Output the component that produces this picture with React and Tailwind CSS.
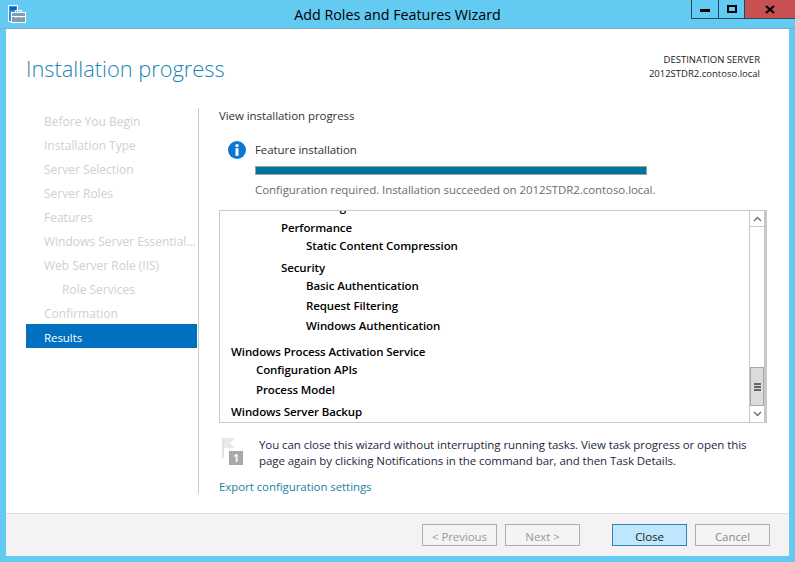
const font = { fontFamily: '"Open Sans", "Noto Sans", sans-serif' };

const steps = [
  { label: 'Before You Begin' },
  { label: 'Installation Type' },
  { label: 'Server Selection' },
  { label: 'Server Roles' },
  { label: 'Features' },
  { label: 'Windows Server Essentials Experience' },
  { label: 'Web Server Role (IIS)' },
  { label: 'Role Services', sub: true },
  { label: 'Confirmation' },
];

const logRows = [
  { text: 'Performance', indent: 'pl-[61px]', gap: 'mt-0' },
  { text: 'Static Content Compression', indent: 'pl-[86px]', gap: 'mt-0' },
  { text: 'Security', indent: 'pl-[61px]', gap: 'mt-[4px]' },
  { text: 'Basic Authentication', indent: 'pl-[86px]', gap: 'mt-0' },
  { text: 'Request Filtering', indent: 'pl-[86px]', gap: 'mt-[2px]' },
  { text: 'Windows Authentication', indent: 'pl-[86px]', gap: 'mt-[2px]' },
  { text: 'Windows Process Activation Service', indent: 'pl-[11px]', gap: 'mt-[8px]' },
  { text: 'Configuration APIs', indent: 'pl-[36px]', gap: 'mt-0' },
  { text: 'Process Model', indent: 'pl-[36px]', gap: 'mt-[2px]' },
  { text: 'Windows Server Backup', indent: 'pl-[11px]', gap: 'mt-[4px]' },
];

function WizardIcon() {
  return (
    <svg width="18" height="18" viewBox="0 0 18 18">
      <rect x="0.5" y="0.5" width="9" height="16" fill="#2f8fe0" stroke="#fff" />
      <rect x="2" y="2" width="6" height="3" fill="#0a63c0" />
      <rect x="3.5" y="7.5" width="14" height="10" fill="#7f9db5" stroke="#fff" />
      <path d="M7.5 7V5.5h6V7" fill="none" stroke="#fff" />
      <path d="M4 11.5h13M8 11v2M13 11v2" stroke="#fff" />
    </svg>
  );
}

function ScrollChevron({ up }) {
  return (
    <svg width="9" height="6" viewBox="0 0 9 6">
      <path d={up ? 'M1 5l3.5-3.5L8 5' : 'M1 1l3.5 3.5L8 1'} fill="none" stroke="#707070" strokeWidth="1.4" />
    </svg>
  );
}

function WizardButton({ children, primary, textColor }) {
  return (
    <button
      className={`w-[75px] h-[22px] pt-[3px] border flex items-center justify-center ${
        primary ? 'bg-[#bee6fd] border-[#3c7fb1]' : 'bg-[#f4f4f4] border-[#adadad]'
      } ${textColor}`}
    >
      {children}
    </button>
  );
}

export default function App() {
  return (
    <div className="w-[795px] h-[562px] bg-[#63caf2] flex flex-col overflow-hidden text-[11.5px] tracking-[-0.07px]" style={font}>
      {/* title bar */}
      <div className="h-[29px] shrink-0 border-b border-[#7fa9c9] grid grid-cols-[1fr_auto_1fr]">
        <div className="pl-[8px] pt-[5px]">
          <WizardIcon />
        </div>
        <div className="text-[14.3px] leading-[29px] tracking-normal text-black">Add Roles and Features Wizard</div>
        <div className="flex justify-end items-start">
          <div className="w-[28px] h-[19px] border border-t-0 border-[#26485c] flex items-center justify-center">
            <div className="w-[10px] h-[3px] bg-black mt-[3px]" />
          </div>
          <div className="w-[26px] h-[19px] border border-l-0 border-t-0 border-[#26485c] flex items-center justify-center">
            <div className="w-[10px] h-[8px] border-2 border-black" />
          </div>
          <div className="w-[50px] h-[19px] bg-[#c75050] border-b border-[#26485c] flex items-center justify-center">
            <svg width="10" height="9" viewBox="0 0 10 9">
              <path d="M1 1l8 7M9 1L1 8" stroke="#000" strokeWidth="2.2" />
            </svg>
          </div>
        </div>
      </div>

      <div className="mx-[6px] mb-[6px] flex-1 bg-white flex flex-col min-h-0">
        {/* header */}
        <div className="h-[79px] shrink-0 flex justify-between pl-[20px] pr-[29px]">
          <h1 className="text-[21.8px] font-light tracking-normal text-[#1b86b4] leading-[32px] pt-[24px]">Installation progress</h1>
          <div className="text-right text-[9.5px] tracking-normal leading-[14px] text-[#222] pt-[24px]">
            <div>DESTINATION SERVER</div>
            <div>2012STDR2.contoso.local</div>
          </div>
        </div>

        <div className="flex flex-1 min-h-0">
          {/* steps */}
          <div className="w-[193px] shrink-0 h-[386px] pl-[20px] pr-px border-r border-[#c8c8c8]">
            {steps.map((s) => (
              <div
                key={s.label}
                className={`h-[24px] text-[12px] tracking-normal leading-[27px] truncate pr-[1px] text-[#cfcfcf] ${s.sub ? 'pl-[36px]' : 'pl-[18px]'}`}
              >
                {s.label}
              </div>
            ))}
            <div className="h-[24px] leading-[27px] pl-[18px] bg-[#0070c0] text-white">Results</div>
          </div>

          {/* content */}
          <div className="flex-1 pl-[20px] pr-[22px]">
            <div className="h-[16px] leading-[16px] text-[#333]">View installation progress</div>
            <div className="flex mt-[9px] pl-[9px]">
              <svg width="18" height="18" viewBox="0 0 18 18" className="mt-[8px] shrink-0">
                <circle cx="9" cy="9" r="9" fill="#0a78d2" />
                <circle cx="9" cy="4.6" r="1.7" fill="#fff" />
                <rect x="7.5" y="7.2" width="3" height="7.6" fill="#fff" />
              </svg>
              <div className="ml-[9px] w-[392px]">
                <div className="h-[16px] mt-[9px] leading-[16px] text-[#333]">Feature installation</div>
                <div className="h-[9px] mt-[8px] bg-[#00759b] border border-[#a0a0a0]" />
                <div className="mt-[7px] leading-[16px] text-[#6d6d6d] whitespace-nowrap">
                  Configuration required. Installation succeeded on 2012STDR2.contoso.local.
                </div>
              </div>
            </div>

            {/* log box */}
            <div className="mt-[12px] h-[213px] border border-[#c8c8c8] flex">
              <div className="flex-1 overflow-hidden font-semibold tracking-[-0.1px] text-black">
                <div className="-mt-[13px] h-[21px] leading-[18px] pl-[86px]">Tracing</div>
                {logRows.map((r) => (
                  <div key={r.text} className={`h-[18px] leading-[18px] ${r.indent} ${r.gap}`}>
                    {r.text}
                  </div>
                ))}
              </div>
              <div className="w-[17px] shrink-0 border-l border-r-2 border-[#c8c8c8] flex flex-col">
                <div className="h-[16px] border-b border-[#c8c8c8] flex items-center justify-center">
                  <ScrollChevron up />
                </div>
                <div className="flex-1" />
                <div className="h-[39px] bg-[#dcdcdc] border border-[#a8a8a8] flex flex-col items-center justify-center gap-px">
                  <div className="w-[7px] h-[2px] bg-[#666]" />
                  <div className="w-[7px] h-[2px] bg-[#666]" />
                  <div className="w-[7px] h-[2px] bg-[#666]" />
                </div>
                <div className="h-[16px] flex items-center justify-center">
                  <ScrollChevron />
                </div>
              </div>
            </div>

            {/* note */}
            <div className="flex mt-[14px] pl-[3px]">
              <svg width="24" height="28" viewBox="0 0 24 28" className="shrink-0">
                <path d="M0 1h2v20H0z" fill="#e2e2e2" />
                <path d="M2 1l11 0-5 5 5 5H2z" fill="#e8e8e8" />
                <rect x="7" y="14" width="14" height="14" fill="#a8a8a8" />
                <text x="14" y="25" textAnchor="middle" fontSize="10" fontWeight="700" fill="#fff">1</text>
              </svg>
              <div className="ml-[13px] w-[500px] leading-[16px] text-[#1f1f3f]">
                You can close this wizard without interrupting running tasks. View task progress or open this page again by clicking Notifications in the command bar, and then Task Details.
              </div>
            </div>
            <div className="mt-[10px] leading-[16px] text-[#1a7fa8]">Export configuration settings</div>
          </div>
        </div>

        {/* footer */}
        <div className="h-[43px] shrink-0 bg-[#f5f2f5] border-t border-[#dcdcdc] flex pl-[416px] pt-[10px]">
          <WizardButton textColor="text-[#9a9a9a]">&lt; Previous</WizardButton>
          <div className="ml-[8px]">
            <WizardButton textColor="text-[#9a9a9a]">Next &gt;</WizardButton>
          </div>
          <div className="ml-[32px]">
            <WizardButton primary textColor="text-[#222]">Close</WizardButton>
          </div>
          <div className="ml-[8px]">
            <WizardButton textColor="text-[#8a8a8a]">Cancel</WizardButton>
          </div>
        </div>
      </div>
    </div>
  );
}
